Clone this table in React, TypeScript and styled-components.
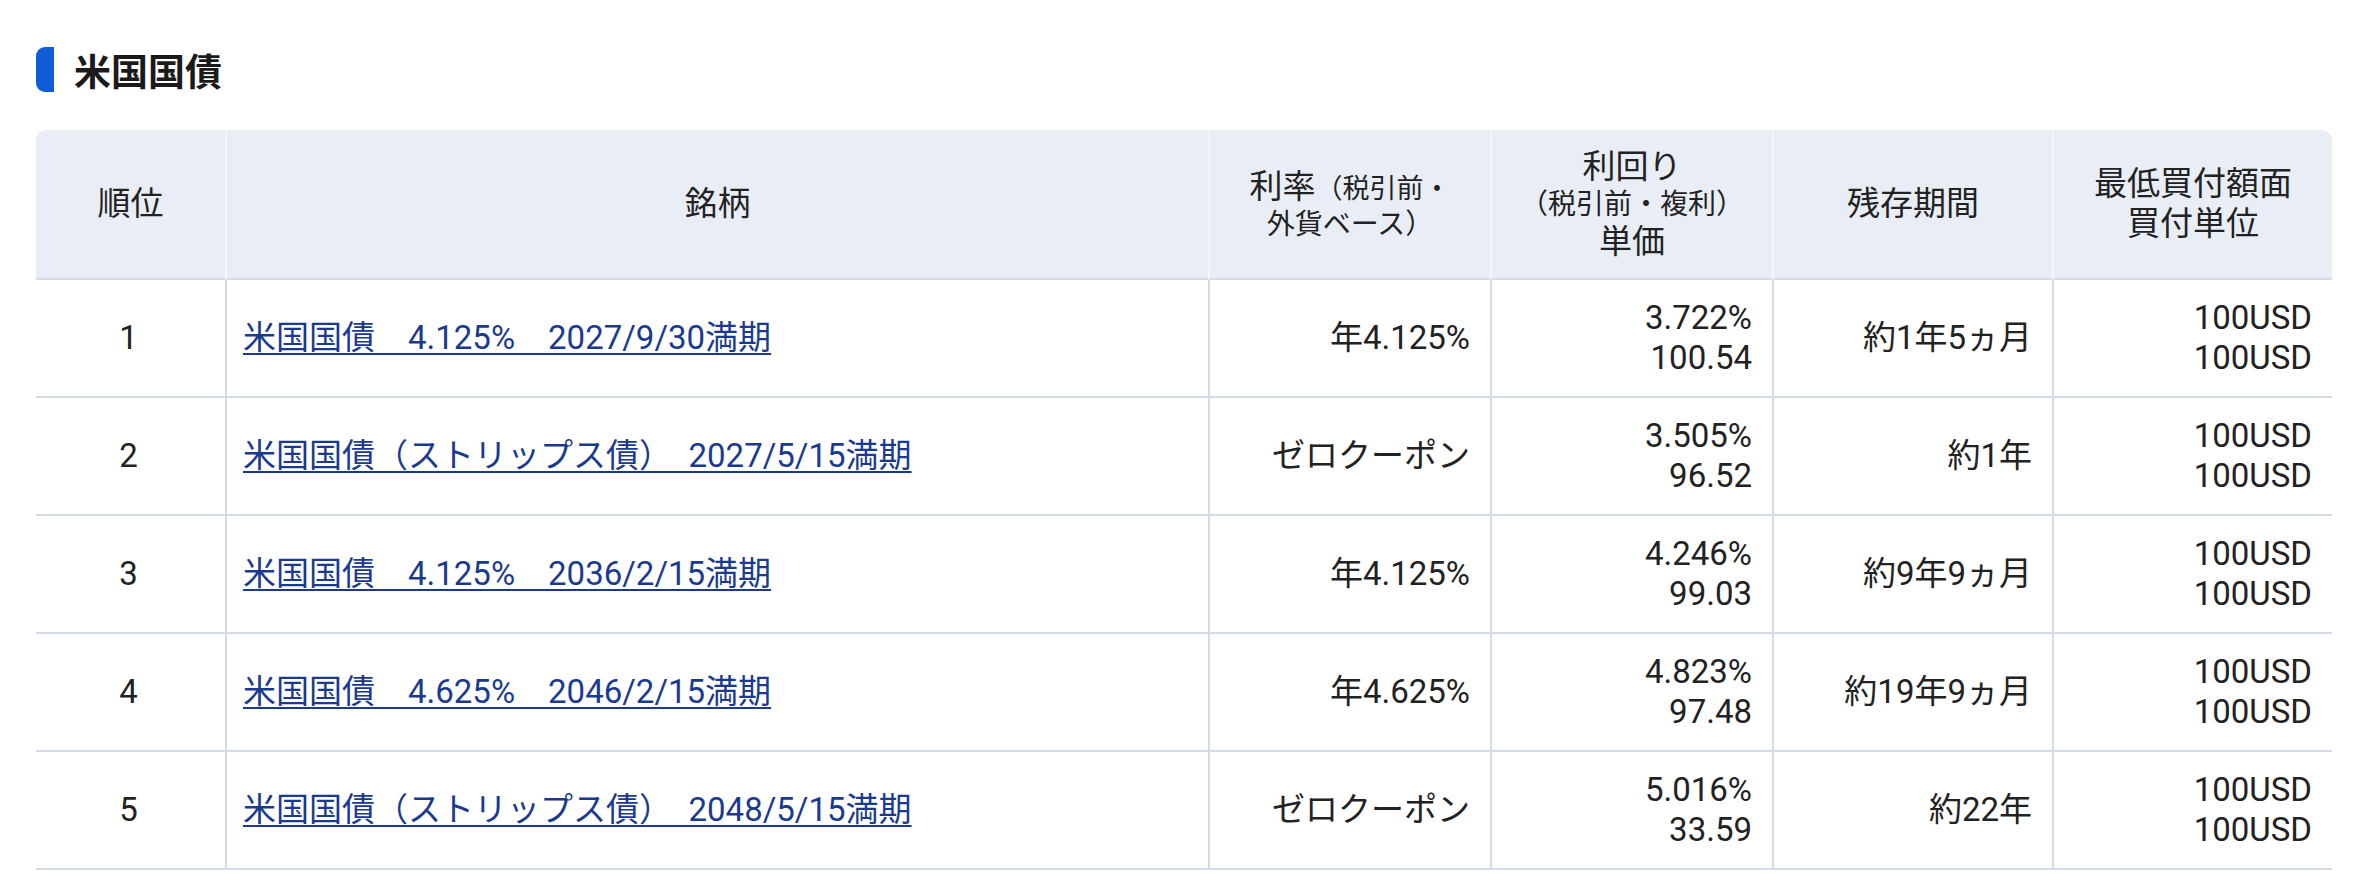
import React from 'react'
import styled, { createGlobalStyle } from 'styled-components'

const GlobalStyle = createGlobalStyle`
    body {
        margin: 0;
        background: #ffffff;
        font-family: Roboto, "Noto Sans CJK JP", sans-serif;
        color: #222222;
    }
`

const StyledSection = styled.section`
    padding: 47px 32px 0 36px;
`

const StyledHeading = styled.h2`
    display: flex;
    align-items: center;
    gap: 20px;
    height: 45px;
    margin: 0 0 38px;
    font-size: 37px;
    font-weight: 700;
    color: #1a1a1a;

    &::before{
        content: '';
        display: block;
        width: 18px;
        height: 45px;
        border-radius: 9px 0 0 9px;
        background-color: #0f5bd8;
    }
`

const StyledTable = styled.table`
    width: 2296px;
    border-collapse: separate;
    border-spacing: 0;
    table-layout: fixed;
    font-size: 33px;
    line-height: 40px;
`

const StyledTh = styled.th`
    background-color: #e9eef6;
    font-weight: 400;
    text-align: center;
    vertical-align: middle;
    padding: 16.5px 20px;
    border-bottom: 2px solid #d3dbe7;
    border-left: 2px solid #f3f6fa;

    &:first-child{
        border-left: none;
        border-top-left-radius: 10px;
    }
    &:last-child{
        border-top-right-radius: 10px;
    }
`

const StyledSmall = styled.span`
    font-size: 27px;
    line-height: 34px;
`

const StyledLine = styled.span<{ $small?: boolean }>`
    display: block;
    font-size: ${({ $small }) => ($small ? '28px' : '33px')};
    line-height: ${({ $small }) => ($small ? '35px' : '40px')};
`

const StyledTd = styled.td<{ $align?: 'left' | 'center' | 'right' }>`
    text-align: ${({ $align }) => $align || 'right'};
    vertical-align: middle;
    padding: 18px 20px 18px 16px;
    border-bottom: 2px solid #d3dbe7;
    border-left: 2px solid #d3dbe7;
    white-space: nowrap;

    &:first-child{
        border-left: none;
    }
`

const StyledLink = styled.a`
    color: #1b3a8f;
    text-decoration: underline;
    text-decoration-thickness: 2px;
    text-underline-offset: 4px;
`

type Bond = {
    rank: number
    name: string
    rate: string
    yieldRate: string
    price: string
    term: string
}

const bonds: Bond[] = [
    { rank: 1, name: '米国国債　4.125%　2027/9/30満期', rate: '年4.125%', yieldRate: '3.722%', price: '100.54', term: '約1年5ヵ月' },
    { rank: 2, name: '米国国債（ストリップス債）　2027/5/15満期', rate: 'ゼロクーポン', yieldRate: '3.505%', price: '96.52', term: '約1年' },
    { rank: 3, name: '米国国債　4.125%　2036/2/15満期', rate: '年4.125%', yieldRate: '4.246%', price: '99.03', term: '約9年9ヵ月' },
    { rank: 4, name: '米国国債　4.625%　2046/2/15満期', rate: '年4.625%', yieldRate: '4.823%', price: '97.48', term: '約19年9ヵ月' },
    { rank: 5, name: '米国国債（ストリップス債）　2048/5/15満期', rate: 'ゼロクーポン', yieldRate: '5.016%', price: '33.59', term: '約22年' },
]

const App = () => {
    return (
        <StyledSection>
            <GlobalStyle />
            <StyledHeading>米国国債</StyledHeading>
            <StyledTable>
                <colgroup>
                    <col style={{ width: 189 }} />
                    <col style={{ width: 983 }} />
                    <col style={{ width: 282 }} />
                    <col style={{ width: 282 }} />
                    <col style={{ width: 280 }} />
                    <col style={{ width: 280 }} />
                </colgroup>
                <thead>
                    <tr>
                        <StyledTh>順位</StyledTh>
                        <StyledTh>銘柄</StyledTh>
                        <StyledTh>
                            <StyledLine>利率<StyledSmall>（税引前・</StyledSmall></StyledLine>
                            <StyledLine $small>外貨ベース）</StyledLine>
                        </StyledTh>
                        <StyledTh>
                            <StyledLine>利回り</StyledLine>
                            <StyledLine $small>（税引前・複利）</StyledLine>
                            <StyledLine>単価</StyledLine>
                        </StyledTh>
                        <StyledTh>残存期間</StyledTh>
                        <StyledTh>
                            <StyledLine>最低買付額面</StyledLine>
                            <StyledLine>買付単位</StyledLine>
                        </StyledTh>
                    </tr>
                </thead>
                <tbody>
                    {bonds.map((bond) => (
                        <tr key={bond.rank}>
                            <StyledTd $align='center'>{bond.rank}</StyledTd>
                            <StyledTd $align='left'>
                                <StyledLink href='#'>{bond.name}</StyledLink>
                            </StyledTd>
                            <StyledTd>{bond.rate}</StyledTd>
                            <StyledTd>
                                <StyledLine>{bond.yieldRate}</StyledLine>
                                <StyledLine>{bond.price}</StyledLine>
                            </StyledTd>
                            <StyledTd>{bond.term}</StyledTd>
                            <StyledTd>
                                <StyledLine>100USD</StyledLine>
                                <StyledLine>100USD</StyledLine>
                            </StyledTd>
                        </tr>
                    ))}
                </tbody>
            </StyledTable>
        </StyledSection>
    )
}

export default App
